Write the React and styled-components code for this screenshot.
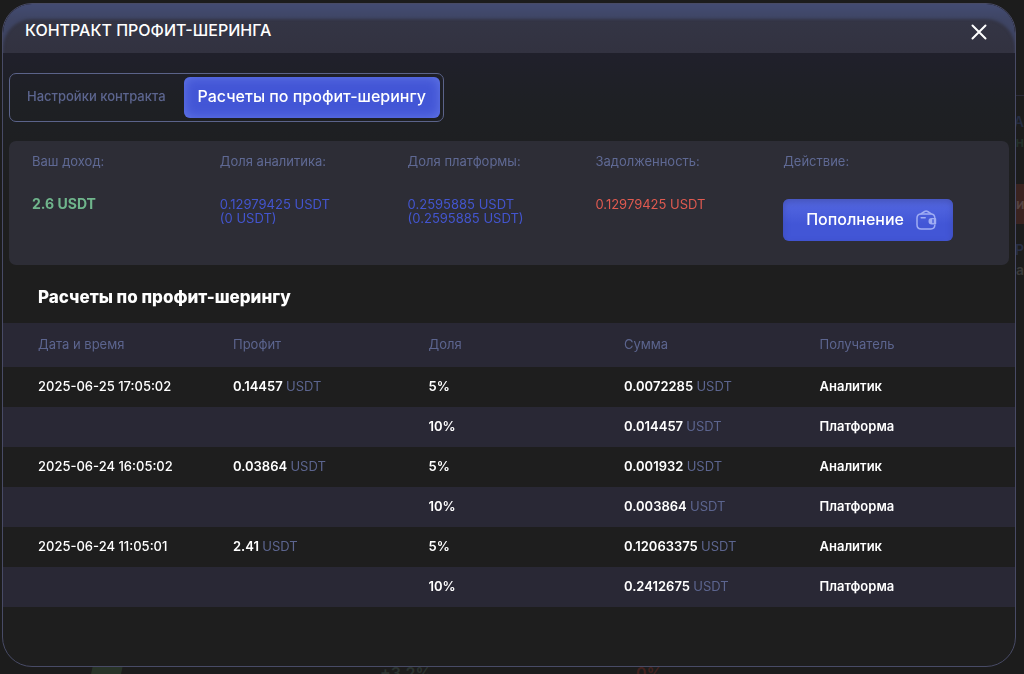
import React from "react"
import styled, { createGlobalStyle } from "styled-components"

const GlobalStyle = createGlobalStyle`
  * {
    box-sizing: border-box;
  }

  body {
    margin: 0;
    background: #1c1c1c;
    font-family: Inter, "Liberation Sans", sans-serif;
    overflow: hidden;
  }

  button {
    font-family: inherit;
    cursor: pointer;
  }
`

const Page = styled.div`
  display: flex;
  flex-direction: column;
  justify-content: space-between;
  height: 100vh;
  overflow: hidden;
`

const PageSide = styled.div`
  align-self: flex-end;
  width: 8px;
  padding-top: 95px;
  overflow: hidden;
  font-size: 14px;
  font-weight: 600;
  line-height: 20px;
  white-space: nowrap;
`

const SideText = styled.div`
  display: flex;
  justify-content: flex-end;
  border-top: ${props => (props.$line ? "1px solid #2b2b38" : "0")};
  padding-top: ${props => (props.$line ? "16" : "0")}px;
  color: ${props => props.color};
`

const SideBlock = styled.div`
  height: 40px;
  margin: 32px 0 16px;
  line-height: 40px;
  background: #3a2320;
  color: #554442;
`

const PageStats = styled.div`
  display: grid;
  grid-template-columns: 92px 288px 256px 1fr;
  height: 9px;
  overflow: hidden;
  font-size: 16px;
  font-weight: 600;
  line-height: 16px;
`

const StatBar = styled.span`
  grid-column: 1;
  justify-self: end;
  width: 30px;
  height: 9px;
  margin-right: -30px;
  background: #283328;
  transform: skewX(-12deg);
`

const Stat = styled.span`
  grid-column: ${props => (props.$negative ? "4" : "3")};
  color: ${props => (props.$negative ? "#43211f" : "#2b3330")};
`

const Modal = styled.section`
  position: fixed;
  inset: 3px 8px 7px 2px;
  display: flex;
  flex-direction: column;
  overflow: hidden;
  color: #ffffff;
  background: linear-gradient(#20202b 50px, #1e2024 100px, #1e1e1e 200px);
  border: 1px solid #484b66;
  border-radius: 30px;
`

const Header = styled.header`
  display: flex;
  flex-shrink: 0;
  align-items: center;
  justify-content: space-between;
  height: 49px;
  padding: 6px 24px 0 22px;
  background: linear-gradient(#3c4160, #343545 15px, #323240);
  border-radius: 29px 29px 0 0;
  box-shadow: inset 0 15px 3px rgba(74, 86, 132, 0.5);
`

const Heading = styled.h1`
  margin: 0;
  padding-bottom: 4px;
  font-size: 16px;
  font-weight: 500;
  line-height: 20px;
`

const CloseButton = styled.button`
  display: flex;
  padding: 4px;
  color: #ffffff;
  background: none;
  border: 0;
`

const Tabs = styled.nav`
  display: flex;
  flex-shrink: 0;
  align-self: flex-start;
  margin: 20px 6px 19px;
  padding: 3px;
  border: 1px solid #5b638a;
  border-radius: 7px;
`

const Tab = styled.button`
  height: 41px;
  padding: 0 ${props => (props.$active ? "14" : "18")}px 4px 14px;
  font-size: ${props => (props.$active ? "16" : "13")}px;
  font-weight: 500;
  color: ${props => (props.$active ? "#ffffff" : "#5c658f")};
  background: ${props => (props.$active ? "#4356d6" : "none")};
  border: 0;
  border-radius: 6px;
  box-shadow: ${props =>
    props.$active ? "inset 0 0 12px rgba(122, 143, 240, 0.6)" : "none"};
`

const Summary = styled.dl`
  display: grid;
  flex-shrink: 0;
  grid-template-columns: repeat(5, 1fr);
  height: 124px;
  margin: 0 6px;
  padding: 12px 38px 0 23px;
  font-size: 13px;
  background: #2d2d36;
  border-radius: 7px;
`

const Label = styled.dt`
  height: 44px;
  line-height: 16px;
  color: #5f6994;
`

const Value = styled.dd`
  margin: 0;
  font-size: ${props => (props.$bold ? "14" : "13")}px;
  font-weight: ${props => (props.$bold ? "700" : "400")};
  line-height: 14px;
  color: ${props => props.color};
`

const PayButton = styled.button`
  display: flex;
  align-items: center;
  justify-content: space-between;
  width: 170px;
  height: 42px;
  margin-top: 2px;
  padding: 0 16px 0 23px;
  font-size: 16px;
  font-weight: 500;
  color: #ffffff;
  background: linear-gradient(#5569e2, #4256d6 60%);
  border: 0;
  border-radius: 6px;
  box-shadow: inset 0 3px 6px rgba(58, 68, 160, 0.6);
`

const PayText = styled.span`
  padding-bottom: 2px;
`

const Subheading = styled.h2`
  flex-shrink: 0;
  margin: 0;
  padding: 20px 35px 14px;
  font-size: 17px;
  font-weight: 800;
  line-height: 24px;
`

const Table = styled.table`
  width: 100%;
  table-layout: fixed;
  border-collapse: collapse;
  font-size: 13px;
  text-align: left;
`

const Row = styled.tr`
  height: ${props => (props.$head ? "44" : "40")}px;
  background: ${props => (props.$shaded ? "#292835" : "#1e1e1e")};
`

const HeadCell = styled.th`
  padding: 0 0 3px;
  font-weight: 400;
  color: #5c658f;

  &:first-child {
    width: 230px;
    padding-left: 35px;
  }
`

const Cell = styled.td`
  padding: 0 0 3px;
  font-weight: 600;

  &:first-child {
    padding-left: 35px;
    font-weight: 500;
  }
`

const Currency = styled.span`
  font-weight: 400;
  color: #5c658f;
`

const columns = ["Дата и время", "Профит", "Доля", "Сумма", "Получатель"]

const payouts = [
  {
    date: "2025-06-25 17:05:02",
    profit: "0.14457",
    share: "5%",
    sum: "0.0072285",
    to: "Аналитик",
  },
  { share: "10%", sum: "0.014457", to: "Платформа" },
  {
    date: "2025-06-24 16:05:02",
    profit: "0.03864",
    share: "5%",
    sum: "0.001932",
    to: "Аналитик",
  },
  { share: "10%", sum: "0.003864", to: "Платформа" },
  {
    date: "2025-06-24 11:05:01",
    profit: "2.41",
    share: "5%",
    sum: "0.12063375",
    to: "Аналитик",
  },
  { share: "10%", sum: "0.2412675", to: "Платформа" },
]

const CloseIcon = () => (
  <svg width="16" height="16" viewBox="0 0 16 16" fill="none">
    <path
      d="M1.5 1.5 14.5 14.5M14.5 1.5 1.5 14.5"
      stroke="currentColor"
      strokeWidth="2"
      strokeLinecap="round"
    />
  </svg>
)

const WalletIcon = () => (
  <svg
    width="21"
    height="20"
    viewBox="0 0 21 20"
    fill="none"
    stroke="#a0adf3"
    strokeWidth="1.5"
    strokeLinecap="round"
    strokeLinejoin="round"
  >
    <path d="M18.800 7.500C18.600 5 17.300 3.900 15 3.900H5.200C2.500 3.900 1 5.400 1 8v6.700c0 2.700 1.500 4.200 4.200 4.200H15c2.400 0 3.600-1.200 3.800-3.700" />
    <path d="M5.200 3.700 8.600 1.500c1-.6 2-.6 3 0L15 3.700" />
    <path d="M5.200 7.700h4" />
    <path
      d="M19.200 7.900h-3.400a3.300 3.300 0 0 0 0 6.600h3.400c.7 0 1-.4 1-1V8.900c0-.6-.3-1-1-1Z"
      fill="#a0adf3"
      stroke="none"
    />
    <path d="M17 9.800v2.800" stroke="#4c60dc" />
  </svg>
)

const Amount = ({ value }) => (
  <>
    {value} <Currency>USDT</Currency>
  </>
)

const PayoutTable = ({ rows }) => (
  <Table>
    <thead>
      <Row $head $shaded>
        {columns.map(name => (
          <HeadCell key={name}>{name}</HeadCell>
        ))}
      </Row>
    </thead>
    <tbody>
      {rows.map((row, i) => (
        <Row key={row.sum} $shaded={i % 2 === 1}>
          <Cell>{row.date}</Cell>
          <Cell>{row.profit && <Amount value={row.profit} />}</Cell>
          <Cell>{row.share}</Cell>
          <Cell>
            <Amount value={row.sum} />
          </Cell>
          <Cell>{row.to}</Cell>
        </Row>
      ))}
    </tbody>
  </Table>
)

const Background = () => (
  <Page aria-hidden="true">
    <PageSide>
      <SideText $line color="#252c42">
        А
      </SideText>
      <SideText color="#24302a">н</SideText>
      <SideBlock>и</SideBlock>
      <SideText color="#282e44">Р</SideText>
      <SideText color="#3a3a3a">а</SideText>
    </PageSide>
    <PageStats>
      <StatBar />
      <Stat>+3.2%</Stat>
      <Stat $negative>0%</Stat>
    </PageStats>
  </Page>
)

const App = () => (
  <>
    <GlobalStyle />
    <Background />
    <Modal role="dialog" aria-labelledby="title">
      <Header>
        <Heading id="title">КОНТРАКТ ПРОФИТ-ШЕРИНГА</Heading>
        <CloseButton aria-label="Закрыть">
          <CloseIcon />
        </CloseButton>
      </Header>
      <Tabs>
        <Tab>Настройки контракта</Tab>
        <Tab $active>Расчеты по профит-шерингу</Tab>
      </Tabs>
      <Summary>
        <div>
          <Label>Ваш доход:</Label>
          <Value $bold color="#6fb58c">
            2.6 USDT
          </Value>
        </div>
        <div>
          <Label>Доля аналитика:</Label>
          <Value color="#4355cf">
            0.12979425 USDT
            <br />
            (0 USDT)
          </Value>
        </div>
        <div>
          <Label>Доля платформы:</Label>
          <Value color="#4355cf">
            0.2595885 USDT
            <br />
            (0.2595885 USDT)
          </Value>
        </div>
        <div>
          <Label>Задолженность:</Label>
          <Value color="#e05a50">0.12979425 USDT</Value>
        </div>
        <div>
          <Label>Действие:</Label>
          <Value>
            <PayButton>
              <PayText>Пополнение</PayText>
              <WalletIcon />
            </PayButton>
          </Value>
        </div>
      </Summary>
      <Subheading>Расчеты по профит-шерингу</Subheading>
      <PayoutTable rows={payouts} />
    </Modal>
  </>
)

export default App
